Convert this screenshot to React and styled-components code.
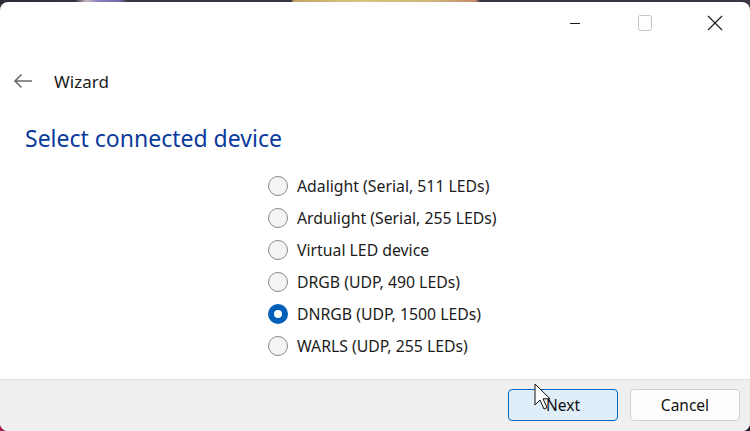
import React, { useState } from "react";
import styled, { createGlobalStyle } from "styled-components";

const GlobalStyle = createGlobalStyle`
  html, body {
    margin: 0;
    padding: 0;
    background: #38343f;
  }
  * {
    box-sizing: border-box;
  }
`;

const devices = [
  "Adalight (Serial, 511 LEDs)",
  "Ardulight (Serial, 255 LEDs)",
  "Virtual LED device",
  "DRGB (UDP, 490 LEDs)",
  "DNRGB (UDP, 1500 LEDs)",
  "WARLS (UDP, 255 LEDs)",
];

const App = () => {
  const [selected, setSelected] = useState(4);

  return (
    <Desktop>
      <GlobalStyle />
      <Window>
        <TitleBar>
          <CaptionButton aria-label="Minimize">
            <svg width="12" height="12" viewBox="0 0 12 12">
              <path d="M1 6.5h10" stroke="#1a1a1a" strokeWidth="1" />
            </svg>
          </CaptionButton>
          <CaptionButton aria-label="Maximize">
            <svg width="14" height="16" viewBox="0 0 14 16">
              <rect x="0.5" y="0.5" width="13" height="15" rx="2" fill="none" stroke="#c4c4c4" strokeWidth="1" />
            </svg>
          </CaptionButton>
          <CaptionButton aria-label="Close">
            <svg width="16" height="16" viewBox="0 0 16 16">
              <path d="M1 1l14 14M15 1L1 15" stroke="#1a1a1a" strokeWidth="1.1" />
            </svg>
          </CaptionButton>
        </TitleBar>

        <NavRow>
          <BackButton aria-label="Back">
            <svg width="20" height="16" viewBox="0 0 20 16">
              <path d="M19 8H2M8.5 1.5L2 8l6.5 6.5" fill="none" stroke="#6b6b6b" strokeWidth="1.6" />
            </svg>
          </BackButton>
          <NavTitle>Wizard</NavTitle>
        </NavRow>

        <Heading>Select connected device</Heading>

        <Options>
          {devices.map((name, i) => (
            <Option key={name} onClick={() => setSelected(i)}>
              <Radio checked={i === selected} />
              <OptionLabel>{name}</OptionLabel>
            </Option>
          ))}
        </Options>

        <Footer>
          <Button primary>Next</Button>
          <Button>Cancel</Button>
          <Cursor width="16" height="28" viewBox="0 0 16 28">
            <path
              d="M1 1v21l5-5 4 9 3-1.4-4-8.8h7z"
              fill="#fff"
              stroke="#111"
              strokeWidth="1"
              strokeLinejoin="round"
            />
          </Cursor>
        </Footer>
      </Window>
    </Desktop>
  );
};

export default App;

const Desktop = styled.div`
  width: 750px;
  height: 431px;
  padding-top: 2px;
  background:
    linear-gradient(
        to right,
        #2f2b38 0%,
        #34303c 10%,
        #c9b7c4 11.5%,
        #8c80be 13%,
        #6e67a8 16%,
        #3a3541 17%,
        #3a3541 38.8%,
        #c7a36a 39.2%,
        #d8c57e 48%,
        #cfb27a 58%,
        #c68a68 63.4%,
        #3a3541 64%
      )
      top / 100% 10px no-repeat,
    linear-gradient(to right, #a3184a 0%, #6a2344 8%, #38343f 40%, #241f2b 100%)
      bottom / 100% 12px no-repeat,
    #38343f;
  font-family: "Noto Sans", "Open Sans", sans-serif;
`;

const Window = styled.div`
  position: relative;
  height: 429px;
  background: #ffffff;
  border-radius: 8px;
  overflow: hidden;
  display: flex;
  flex-direction: column;
`;

const TitleBar = styled.div`
  height: 42px;
  display: flex;
  justify-content: flex-end;
`;

const CaptionButton = styled.button`
  width: 70px;
  height: 42px;
  border: none;
  background: transparent;
  padding: 0;
  display: flex;
  align-items: center;
  justify-content: center;
  cursor: default;
`;

const NavRow = styled.div`
  display: flex;
  align-items: center;
  height: 32px;
  margin-top: 21px;
  padding-left: 12px;
`;

const BackButton = styled.button`
  width: 22px;
  height: 22px;
  border: none;
  background: transparent;
  padding: 0;
  display: flex;
  align-items: center;
  justify-content: center;
`;

const NavTitle = styled.span`
  margin-left: 20px;
  font-size: 17px;
  color: #1b1b1b;
`;

const Heading = styled.h1`
  margin: 26px 0 0 25px;
  font-size: 23px;
  font-weight: 400;
  line-height: 30px;
  color: #0a3a9c;
`;

const Options = styled.div`
  margin-top: 23px;
  padding-left: 268px;
  display: flex;
  flex-direction: column;
  gap: 12px;
`;

const Option = styled.label`
  display: flex;
  align-items: center;
  height: 20px;
  cursor: default;
`;

const Radio = styled.span`
  width: 20px;
  height: 20px;
  border-radius: 50%;
  flex-shrink: 0;
  border: ${(p) => (p.checked ? "none" : "1px solid #8a8a8a")};
  background: ${(p) => (p.checked ? "#005fb8" : "#f4f4f4")};
  display: flex;
  align-items: center;
  justify-content: center;

  &::after {
    content: "";
    display: ${(p) => (p.checked ? "block" : "none")};
    width: 8px;
    height: 8px;
    border-radius: 50%;
    background: #ffffff;
  }
`;

const OptionLabel = styled.span`
  margin-left: 9px;
  font-size: 15.8px;
  color: #1b1b1b;
`;

const Footer = styled.div`
  position: relative;
  margin-top: auto;
  height: 52px;
  background: #efefef;
  border-top: 1px solid #e0e0e0;
  display: flex;
  justify-content: flex-end;
  align-items: center;
  gap: 12px;
  padding: 0 10px 2px 0;
`;

const Button = styled.button`
  width: 110px;
  height: 32px;
  border-radius: 4px;
  font-family: inherit;
  font-size: 15.5px;
  color: #111;
  border: 1px solid ${(p) => (p.primary ? "#0067c0" : "#d2d2d2")};
  background: ${(p) => (p.primary ? "#e0eef9" : "#fdfdfd")};
`;

const Cursor = styled.svg`
  position: absolute;
  left: 534px;
  top: 3px;
`;
